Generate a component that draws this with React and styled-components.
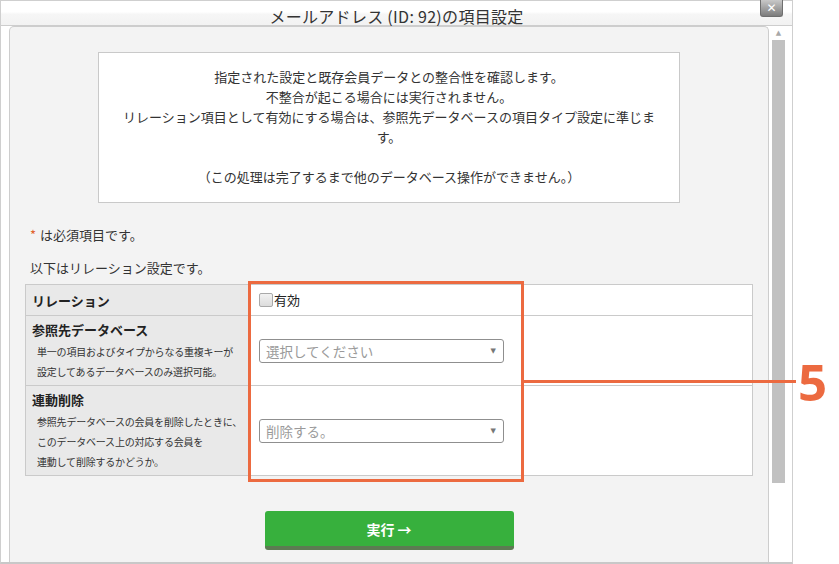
import React from 'react';
import styled, { createGlobalStyle } from 'styled-components';

const GlobalStyle = createGlobalStyle`
  html, body {
    margin: 0;
    padding: 0;
    background: #fff;
  }
  body {
    font-family: "Noto Sans CJK JP", "Noto Sans", sans-serif;
    color: #333;
  }
`;

const Page = styled.div`
  position: relative;
  width: 839px;
  height: 564px;
  overflow: hidden;
`;

const Dialog = styled.div`
  width: 793px;
  height: 564px;
  box-sizing: border-box;
  border: 1px solid #cfcfcf;
  border-bottom: 2px solid #c8c8c8;
  display: flex;
  flex-direction: column;
  background: #fff;
`;

const TitleBar = styled.div`
  height: 24px;
  display: grid;
  grid-template-columns: 1fr auto 1fr;
  border-bottom: 1px solid #cdcdcd;
  background: linear-gradient(#fff 0%, #fff 45%, #f6f6f6 55%, #f2f2f2 100%);
`;

const Title = styled.h1`
  grid-column: 2;
  margin: 0;
  font-size: 16px;
  font-weight: normal;
  line-height: 30px;
  letter-spacing: 0.3px;
  color: #333;
  white-space: nowrap;
`;

const CloseButton = styled.button`
  grid-column: 3;
  justify-self: end;
  align-self: start;
  margin: -1px 9px 0 0;
  width: 23px;
  height: 17px;
  padding: 0;
  border: 1px solid #6f6f6f;
  border-top: none;
  border-radius: 0 0 3px 3px;
  background: linear-gradient(#c8c8c8, #7c7c7c);
  color: #fff;
  font-size: 12px;
  font-weight: bold;
  line-height: 15px;
  font-family: "DejaVu Sans", sans-serif;
`;

const Body = styled.div`
  flex: 1;
  display: flex;
  padding-left: 8px;
  min-height: 0;
`;

const Panel = styled.div`
  flex: 1;
  border: 1px solid #cdcdcd;
  border-bottom: none;
  border-radius: 5px 5px 0 0;
  background: #f3f3f3;
  display: flex;
  flex-direction: column;
`;

const Scrollbar = styled.div`
  width: 23px;
  display: flex;
  flex-direction: column;
  align-items: flex-start;
  padding-left: 3px;
  box-sizing: border-box;
  background: #fff;
`;

const ScrollArrow = styled.div`
  width: 13px;
  height: 14px;
  display: flex;
  align-items: center;
  justify-content: center;
  color: #a8a8a8;
  font-size: 7px;
  font-family: "DejaVu Sans", sans-serif;
`;

const ScrollThumb = styled.div`
  width: 13px;
  height: 443px;
  background: #c1c1c1;
`;

const InfoBox = styled.div`
  width: 582px;
  box-sizing: border-box;
  margin: 25px auto 0;
  padding: 14px 15px 15px;
  background: #fff;
  border: 1px solid #c9c9c9;
  font-size: 13px;
  line-height: 20px;
  text-align: center;
  color: #333;
`;

const Note = styled.p`
  margin: ${({ $top }) => $top}px 0 0 20px;
  font-size: 13px;
  line-height: 20px;
  color: #333;
`;

const Required = styled.span`
  color: #e0612c;
  margin-right: 4px;
`;

const Table = styled.table`
  margin: 6px 15px 0;
  width: 728px;
  border-collapse: collapse;
  background: #fff;
`;

const LabelCell = styled.th`
  width: 224px;
  padding: 4px 6px 3px;
  text-align: left;
  vertical-align: middle;
  background: #e9e9e9;
  border: 1px solid #cacaca;
  height: ${({ $h }) => $h}px;
  box-sizing: border-box;
`;

const LabelTitle = styled.div`
  font-size: 13px;
  font-weight: bold;
  line-height: 20px;
  color: #222;
`;

const LabelHelp = styled.div`
  margin: 2px 0 0 5px;
  font-size: 10px;
  font-weight: normal;
  line-height: 20px;
  letter-spacing: -0.2px;
  white-space: nowrap;
  color: #333;
`;

const ValueCell = styled.td`
  padding: 0 0 0 9px;
  vertical-align: middle;
  border: 1px solid #cacaca;
`;

const CheckLabel = styled.label`
  display: inline-flex;
  align-items: center;
  gap: 1px;
  font-size: 13px;
  line-height: 20px;
  color: #222;
`;

const CheckBox = styled.span`
  width: 12px;
  height: 12px;
  border: 1px solid #a9a9a9;
  border-radius: 2px;
  background: linear-gradient(#f2f2f2, #dcdcdc);
`;

const Select = styled.div`
  width: 245px;
  height: 24px;
  box-sizing: border-box;
  border: 1px solid #8f8f8f;
  border-radius: 3px;
  background: #fff;
  display: flex;
  align-items: center;
  justify-content: space-between;
  padding: 0 7px 0 6px;
  font-size: 13.5px;
  color: #9a9a9a;
`;

const Caret = styled.span`
  font-size: 7px;
  color: #777;
  font-family: "DejaVu Sans", sans-serif;
`;

const Actions = styled.div`
  display: flex;
  justify-content: center;
  margin-top: 35px;
`;

const RunButton = styled.button`
  width: 249px;
  height: 39px;
  border: none;
  border-bottom: 4px solid #5c7b52;
  border-radius: 3px;
  background: #37b03d;
  color: #fff;
  font-family: "Noto Sans CJK JP", sans-serif;
  font-size: 14px;
  font-weight: bold;
  padding: 0;
`;

const Highlight = styled.div`
  position: absolute;
  left: 248px;
  top: 281px;
  width: 276px;
  height: 201px;
  box-sizing: border-box;
  border: 3px solid #ec6a40;
`;

const Leader = styled.div`
  position: absolute;
  left: 524px;
  top: 380px;
  width: 272px;
  height: 3px;
  background: #ec6a40;
`;

const Badge = styled.div`
  position: absolute;
  left: 798px;
  top: 351px;
  font-family: "Open Sans", sans-serif;
  font-weight: bold;
  font-size: 51px;
  line-height: 60px;
  color: #ec6a40;
`;

const help = {
  ref: ['単一の項目およびタイプからなる重複キーが', '設定してあるデータベースのみ選択可能。'],
  del: ['参照先データベースの会員を削除したときに、', 'このデータベース上の対応する会員を', '連動して削除するかどうか。'],
};

export default function App() {
  return (
    <Page>
      <GlobalStyle />
      <Dialog>
        <TitleBar>
          <Title>メールアドレス (ID: 92)の項目設定</Title>
          <CloseButton>✕</CloseButton>
        </TitleBar>
        <Body>
          <Panel>
            <InfoBox>
              指定された設定と既存会員データとの整合性を確認します。<br />
              不整合が起こる場合には実行されません。<br />
              リレーション項目として有効にする場合は、参照先データベースの項目タイプ設定に準じます。<br />
              <br />
              （この処理は完了するまで他のデータベース操作ができません。）
            </InfoBox>
            <Note $top={22}><Required>*</Required>は必須項目です。</Note>
            <Note $top={13}>以下はリレーション設定です。</Note>
            <Table>
              <tbody>
                <tr>
                  <LabelCell $h={31}><LabelTitle>リレーション</LabelTitle></LabelCell>
                  <ValueCell>
                    <CheckLabel><CheckBox />有効</CheckLabel>
                  </ValueCell>
                </tr>
                <tr>
                  <LabelCell>
                    <LabelTitle>参照先データベース</LabelTitle>
                    <LabelHelp>{help.ref.map((l) => <div key={l}>{l}</div>)}</LabelHelp>
                  </LabelCell>
                  <ValueCell>
                    <Select>選択してください<Caret>▼</Caret></Select>
                  </ValueCell>
                </tr>
                <tr>
                  <LabelCell>
                    <LabelTitle>連動削除</LabelTitle>
                    <LabelHelp>{help.del.map((l) => <div key={l}>{l}</div>)}</LabelHelp>
                  </LabelCell>
                  <ValueCell>
                    <Select>削除する。<Caret>▼</Caret></Select>
                  </ValueCell>
                </tr>
              </tbody>
            </Table>
            <Actions>
              <RunButton>実行 →</RunButton>
            </Actions>
          </Panel>
          <Scrollbar>
            <ScrollArrow>▲</ScrollArrow>
            <ScrollThumb />
          </Scrollbar>
        </Body>
      </Dialog>
      <Highlight />
      <Leader />
      <Badge>5</Badge>
    </Page>
  );
}
